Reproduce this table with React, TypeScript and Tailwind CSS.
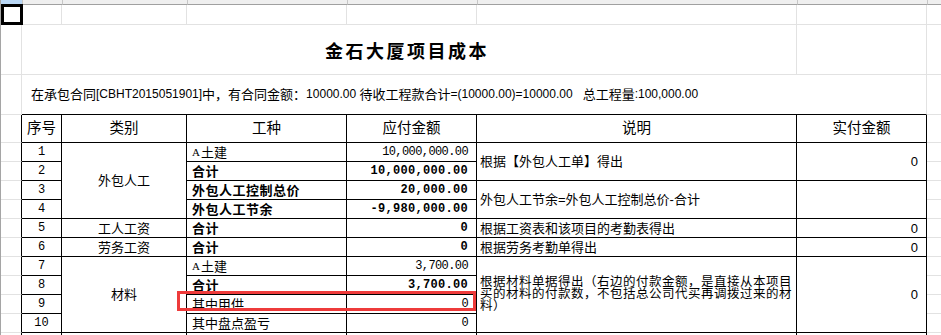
import React from "react";

const grid = "grid grid-cols-[1px_21px_40px_125px_160px_130px_320px_130px_14px]";
const faint = "border-[#e2e2e2]";
const num = "font-['Liberation_Mono',monospace] text-[12px]";
const amt = "justify-end pr-[8px] font-['Liberation_Mono',monospace] text-[12px] tracking-[-0.6px]";
const amtBold = "justify-end pr-[8px] font-['Liberation_Mono',monospace] text-[12px] font-bold tracking-[0.3px]";
const work = "pl-[5px]";
const workBold = "pl-[5px] font-bold tracking-[0.5px]";
const note = "pl-[3px]";
const paid = "justify-end pr-[8px]";

function Td({ className = "", children }: { className?: string; children?: React.ReactNode }) {
  return (
    <div className={"flex items-center min-w-0 overflow-hidden whitespace-nowrap border-r border-b border-black " + className}>
      {children}
    </div>
  );
}

// row header sliver + column A on the left of every sheet row
function Lead() {
  return (
    <>
      <div className="bg-[#a5a5a5]" />
      <div className="border-r border-b border-r-black border-b-[#e2e2e2]" />
    </>
  );
}

function Tail() {
  return <div className={"border-b " + faint} />;
}

function Seq({ n }: { n: string }) {
  return <Td className={"justify-center " + num}>{n}</Td>;
}

function ATuJian() {
  return (
    <>
      <span className="font-['Liberation_Serif',serif] text-[11px] mr-[1px]">A</span>土建
    </>
  );
}

// CJK runs are a touch larger than the latin runs in the info line
function Hz({ children }: { children: React.ReactNode }) {
  return <span className="text-[13px] font-['Noto_Sans_CJK_SC',sans-serif]">{children}</span>;
}

export default function App() {
  return (
    <div className="relative w-[941px] h-[335px] overflow-hidden bg-white text-black text-[13px] leading-none font-['Liberation_Sans','Noto_Sans_CJK_SC',sans-serif]">
      {/* column header strip */}
      <div className={grid + " h-[5px]"}>
        <div className="bg-[#a5a5a5]" />
        <div className="bg-[#b9d7f5] border-b border-b-[#a0a0a0]" />
        <div className="bg-[#efefef] border-l border-b border-l-[#c6c6c6] border-b-[#a0a0a0]" />
        <div className="bg-[#efefef] border-l border-b border-l-[#c6c6c6] border-b-[#a0a0a0]" />
        <div className="bg-[#efefef] border-l border-b border-l-[#c6c6c6] border-b-[#a0a0a0]" />
        <div className="bg-[#efefef] border-l border-b border-l-[#c6c6c6] border-b-[#a0a0a0]" />
        <div className="bg-[#efefef] border-l border-b border-l-[#c6c6c6] border-b-[#a0a0a0]" />
        <div className="bg-[#efefef] border-l border-b border-l-[#c6c6c6] border-b-[#a0a0a0]" />
        <div className="bg-[#efefef] border-l border-b border-l-[#c6c6c6] border-b-[#a0a0a0]" />
      </div>

      {/* row 1 */}
      <div className={grid + " h-[20px]"}>
        <div className="bg-[#a5a5a5]" />
        <div className={"border-r border-b " + faint} />
        <div className={"border-r border-b " + faint} />
        <div className={"border-r border-b " + faint} />
        <div className={"border-r border-b " + faint} />
        <div className={"border-r border-b " + faint} />
        <div className={"border-r border-b " + faint} />
        <div className={"border-r border-b " + faint} />
        <div className={"border-b " + faint} />
      </div>

      {/* title */}
      <div className={grid + " h-[50px]"}>
        <div className="bg-[#a5a5a5]" />
        <div className={"border-r border-b " + faint} />
        <div className={"col-span-5 flex items-center justify-center pr-[4px] border-r border-b " + faint}>
          <span className="font-['Noto_Sans_CJK_SC',sans-serif] font-bold text-[18px] tracking-[2.5px]">金石大厦项目成本</span>
        </div>
        <div className={"border-r border-b " + faint} />
        <div className={"border-b " + faint} />
      </div>

      {/* info line */}
      <div className={grid + " h-[40px]"}>
        <div className="bg-[#a5a5a5]" />
        <div className={"border-r border-b " + faint} />
        <div className="col-span-6 flex items-center pl-[9px] pb-[2px] whitespace-pre text-[12px] border-r border-b border-r-[#e2e2e2] border-b-black">
          <Hz>在承包合同</Hz>[CBHT2015051901]<Hz>中，有合同金额：</Hz>10000.00 <Hz>待收工程款合计</Hz>=(10000.00)=10000.00{"   "}<Hz>总工程量</Hz>:100,000.00
        </div>
        <div className={"border-b " + faint} />
      </div>

      {/* cost table */}
      <div className={grid + " grid-rows-[28px_repeat(11,19px)]"}>
        <Lead />
        <Td className="justify-center text-[14.5px]">序号</Td>
        <Td className="justify-center text-[14.5px]">类别</Td>
        <Td className="justify-center text-[14.5px]">工种</Td>
        <Td className="justify-center text-[14.5px]">应付金额</Td>
        <Td className="justify-center text-[14.5px]">说明</Td>
        <Td className="justify-center text-[14.5px]">实付金额</Td>
        <Tail />

        <Lead />
        <Seq n="1" />
        <Td className="row-span-4 justify-center">外包人工</Td>
        <Td className={work}><ATuJian /></Td>
        <Td className={amt}>10,000,000.00</Td>
        <Td className={"row-span-2 " + note}>根据【外包人工单】得出</Td>
        <Td className={"row-span-2 " + paid}>0</Td>
        <Tail />

        <Lead />
        <Seq n="2" />
        <Td className={workBold}>合计</Td>
        <Td className={amtBold}>10,000,000.00</Td>
        <Tail />

        <Lead />
        <Seq n="3" />
        <Td className={workBold}>外包人工控制总价</Td>
        <Td className={amtBold}>20,000.00</Td>
        <Td className={"row-span-2 " + note}>外包人工节余=外包人工控制总价-合计</Td>
        <Td className="row-span-2" />
        <Tail />

        <Lead />
        <Seq n="4" />
        <Td className={workBold}>外包人工节余</Td>
        <Td className={amtBold}>-9,980,000.00</Td>
        <Tail />

        <Lead />
        <Seq n="5" />
        <Td className="justify-center">工人工资</Td>
        <Td className={workBold}>合计</Td>
        <Td className={amtBold}>0</Td>
        <Td className={note}>根据工资表和该项目的考勤表得出</Td>
        <Td className={paid}>0</Td>
        <Tail />

        <Lead />
        <Seq n="6" />
        <Td className="justify-center">劳务工资</Td>
        <Td className={workBold}>合计</Td>
        <Td className={amtBold}>0</Td>
        <Td className={note}>根据劳务考勤单得出</Td>
        <Td className={paid}>0</Td>
        <Tail />

        <Lead />
        <Seq n="7" />
        <Td className="row-span-4 justify-center">材料</Td>
        <Td className={work}><ATuJian /></Td>
        <Td className={amt}>3,700.00</Td>
        <Td className={"row-span-4 " + note}>
          <div className="flex flex-col pb-[3px] font-['Noto_Sans_CJK_SC',sans-serif] text-[12.5px] tracking-[0.5px]">
            <span className="block h-[12px] leading-[12px]">根据材料单据得出（右边的付款金额，是直接从本项目</span>
            <span className="block h-[12px] leading-[12px]">买的材料的付款数，不包括总公司代买再调拨过来的材</span>
            <span className="block h-[12px] leading-[12px]">料）</span>
          </div>
        </Td>
        <Td className={"row-span-4 " + paid}>0</Td>
        <Tail />

        <Lead />
        <Seq n="8" />
        <Td className={workBold}>合计</Td>
        <Td className={amtBold}>3,700.00</Td>
        <Tail />

        <Lead />
        <Seq n="9" />
        <Td className={work}>其中甲供</Td>
        <Td className={amt}>0</Td>
        <Tail />

        <Lead />
        <Seq n="10" />
        <Td className={work}>其中盘点盈亏</Td>
        <Td className={amt}>0</Td>
        <Tail />

        <Lead />
        <Td />
        <Td />
        <Td />
        <Td />
        <Td />
        <Td />
        <Tail />
      </div>

      {/* selected cell */}
      <div className="absolute left-[1px] top-[4px] w-[22px] h-[21px] border-[3px] border-black" />
      {/* annotation box */}
      <div className="absolute left-[177px] top-[291px] w-[299px] h-[20px] border-[3px] border-[#ee3b3b]" />
    </div>
  );
}
